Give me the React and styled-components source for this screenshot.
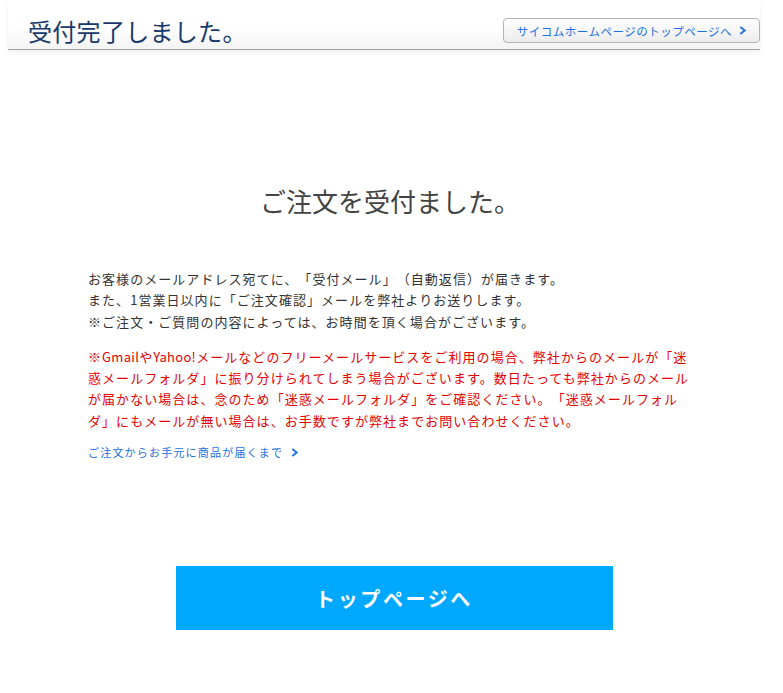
import React from 'react';
import styled, { createGlobalStyle } from 'styled-components';

const GlobalStyle = createGlobalStyle`
  body {
    margin: 0;
    background: #fff;
    font-family: "Noto Sans CJK JP", "Noto Sans", sans-serif;
    text-spacing-trim: space-all;
  }
`;

const Header = styled.header`
  display: flex;
  align-items: flex-end;
  justify-content: space-between;
  height: 50px;
  margin: 0 23px 0 8px;
  padding-left: 20px;
  box-sizing: border-box;
  background: linear-gradient(to bottom, #fff 60%, #f3f3f3 100%);
  border-bottom: 1px solid #a3a3a3;
  box-shadow: 0 3px 5px rgba(0, 0, 0, 0.06);
`;

const Title = styled.h1`
  margin: 0 0 3px;
  font-size: 24px;
  font-weight: 400;
  line-height: 30px;
  letter-spacing: 0.3px;
  color: #17396b;
`;

const HomeButton = styled.a`
  display: flex;
  align-items: center;
  gap: 6px;
  align-self: flex-start;
  margin-top: 18px;
  height: 25px;
  padding: 0 12px 0 13px;
  box-sizing: border-box;
  border: 1px solid #b3b3b3;
  border-radius: 4px;
  background: linear-gradient(to bottom, #fff, #ececec);
  color: #1a70e0;
  font-size: 11.5px;
  letter-spacing: 0.5px;
  text-decoration: none;
  white-space: nowrap;
`;

const Main = styled.main`
  width: 612px;
  margin: 0 auto;
  padding-left: 5px;
`;

const Heading = styled.h2`
  margin: 135px 0 0;
  text-align: center;
  font-size: 26px;
  font-weight: 400;
  line-height: 32px;
  color: #444;
  padding-right: 8px;
`;

const Note = styled.p`
  margin: ${(p) => p.$top || 0}px 0 0;
  font-size: 13px;
  letter-spacing: 1.05px;
  line-height: 21.3px;
  color: ${(p) => (p.$warn ? '#e60000' : '#333')};
`;

const Latin = styled.span`
  letter-spacing: 0.3px;
`;

const FlowLink = styled.a`
  display: inline-flex;
  align-items: center;
  gap: 7px;
  margin-top: 13px;
  font-size: 11px;
  letter-spacing: 1.2px;
  color: #1a70e0;
  text-decoration: none;
`;

const BigButton = styled.a`
  display: flex;
  align-items: center;
  justify-content: center;
  width: 437px;
  height: 64px;
  margin: 104px auto 0;
  background: #00a9ff;
  color: #fff;
  font-size: 20px;
  font-weight: 700;
  letter-spacing: 2.6px;
  text-decoration: none;
`;

const Chevron = ({ size = 9 }) => (
  <svg width={size} height={size} viewBox="0 0 10 10">
    <path d="M2.5 1.2 L7.5 5 L2.5 8.8" fill="none" stroke="#1a70e0" strokeWidth="2" />
  </svg>
);

export default function App() {
  return (
    <>
      <GlobalStyle />
      <Header>
        <Title>受付完了しました。</Title>
        <HomeButton href="#">
          サイコムホームページのトップページへ
          <Chevron />
        </HomeButton>
      </Header>
      <Main>
        <Heading>ご注文を受付ました。</Heading>
        <Note $top={51}>
          お客様のメールアドレス宛てに、「受付メール」（自動返信）が届きます。
          <br />
          また、1営業日以内に「ご注文確認」メールを弊社よりお送りします。
          <br />
          ※ご注文・ご質問の内容によっては、お時間を頂く場合がございます。
        </Note>
        <Note $warn $top={14}>
          ※<Latin>Gmail</Latin>や<Latin>Yahoo!</Latin>メールなどのフリーメールサービスをご利用の場合、弊社からのメールが「迷惑メールフォルダ」に振り分けられてしまう場合がございます。数日たっても弊社からのメールが届かない場合は、念のため「迷惑メールフォルダ」をご確認ください。「迷惑メールフォルダ」にもメールが無い場合は、お手数ですが弊社までお問い合わせください。
        </Note>
        <FlowLink href="#">
          ご注文からお手元に商品が届くまで
          <Chevron />
        </FlowLink>
        <BigButton href="#">トップページへ</BigButton>
      </Main>
    </>
  );
}
